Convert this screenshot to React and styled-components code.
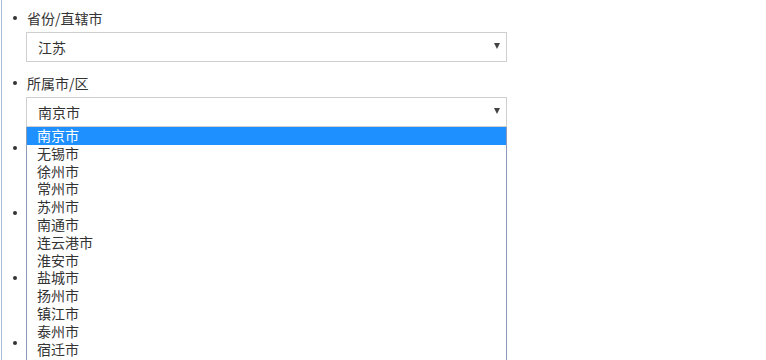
import React from "react";
import styled, { createGlobalStyle } from "styled-components";

const Global = createGlobalStyle`
  html, body { margin: 0; padding: 0; background: #fff; }
  body {
    font-family: "Noto Sans CJK SC", "Liberation Sans", sans-serif;
    color: #333;
    overflow: hidden;
  }
`;

const Page = styled.div`
  margin-left: 1px;
  border-left: 1px solid #a9bcd8;
  height: 360px;
  overflow: hidden;
  padding-top: 8px;
  box-sizing: border-box;
`;

const List = styled.ul`
  margin: 0;
  padding: 0 0 0 24px;
  list-style: none;
`;

const Item = styled.li`
  position: relative;
  height: 65px;
`;

const LabelRow = styled.div`
  display: flex;
  align-items: center;
  height: 20px;
  margin-left: -13px;
  margin-bottom: 4px;
  font-size: 14px;
  color: #333;
`;

const Bullet = styled.span`
  width: 4px;
  height: 4px;
  border-radius: 50%;
  background: #333;
  margin-right: 10px;
  flex: none;
`;

const SelectWrap = styled.div`
  position: relative;
  width: 481px;
  z-index: ${(p) => (p.$open ? 10 : 1)};
`;

const Select = styled.div`
  box-sizing: border-box;
  height: 30px;
  border: 1px solid #cfcfcf;
  background: #fff;
  display: flex;
  align-items: center;
  justify-content: space-between;
  padding: 0 6px 0 11px;
  font-size: 14px;
  color: #333;
`;

const Arrow = styled.span`
  width: 0;
  height: 0;
  border-left: 3.5px solid transparent;
  border-right: 3.5px solid transparent;
  border-top: 6px solid #444;
  margin-top: -2px;
`;

const Dropdown = styled.div`
  position: absolute;
  top: 100%;
  left: 0;
  width: 481px;
  box-sizing: border-box;
  border: 1px solid #8d9ab8;
  border-top: none;
  padding-bottom: 12px;
  background: #fff;
`;

const Option = styled.div`
  height: 17.8px;
  line-height: 17.8px;
  padding-left: 10px;
  font-size: 14px;
  color: ${(p) => (p.$active ? "#fff" : "#333")};
  background: ${(p) => (p.$active ? "#1e90ff" : "transparent")};
  white-space: nowrap;
`;

const cities = [
  "南京市",
  "无锡市",
  "徐州市",
  "常州市",
  "苏州市",
  "南通市",
  "连云港市",
  "淮安市",
  "盐城市",
  "扬州市",
  "镇江市",
  "泰州市",
  "宿迁市",
];

const fields = [
  { id: "province", label: "省份/直辖市", value: "江苏" },
  { id: "city", label: "所属市/区", value: "南京市", open: true },
  { id: "f3" },
  { id: "f4" },
  { id: "f5" },
  { id: "f6" },
];

export default function App() {
  return (
    <>
      <Global />
      <Page>
        <List>
          {fields.map((f) => (
            <Item key={f.id}>
              <LabelRow>
                <Bullet />
                {f.label}
              </LabelRow>
              {f.label && (
                <SelectWrap $open={f.open}>
                  <Select>
                    <span>{f.value}</span>
                    <Arrow />
                  </Select>
                  {f.open && (
                    <Dropdown>
                      {cities.map((c, i) => (
                        <Option key={c} $active={i === 0}>
                          {c}
                        </Option>
                      ))}
                    </Dropdown>
                  )}
                </SelectWrap>
              )}
            </Item>
          ))}
        </List>
      </Page>
    </>
  );
}
